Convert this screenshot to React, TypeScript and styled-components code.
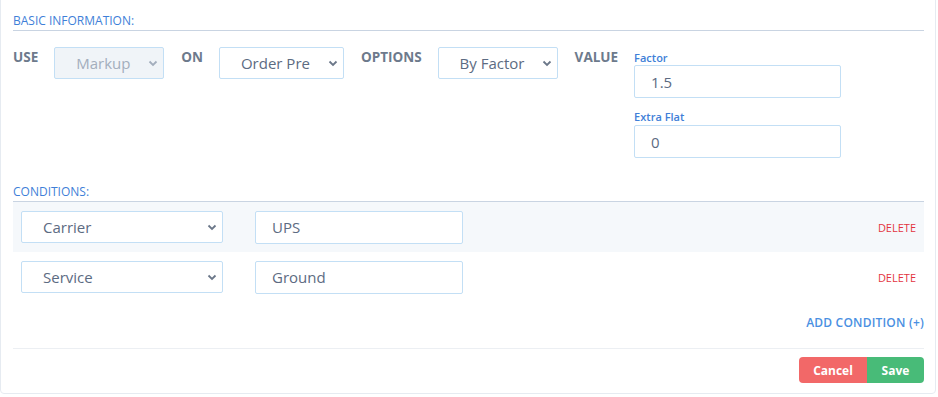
import styled, { createGlobalStyle } from 'styled-components';

const GlobalStyle = createGlobalStyle`
  body {
    margin: 0;
    background: #ffffff;
    font-family: 'Open Sans', 'Noto Sans', sans-serif;
    overflow: hidden;
  }
`;

const Card = styled.div`
  width: 936px;
  box-sizing: border-box;
  margin-top: -6px;
  padding: 18px 11px 10px 12px;
  border: 1px solid #e6ebf1;
  border-radius: 4px;
  background: #fff;
`;

const SectionTitle = styled.div<{ $top?: number }>`
  margin-top: ${(p) => p.$top ?? 0}px;
  font-size: 12px;
  line-height: 16px;
  color: #3f7fd8;
  text-transform: uppercase;
  padding-bottom: 1px;
  border-bottom: 1px solid #c9d4e2;
`;

const BasicRow = styled.div`
  display: flex;
  align-items: flex-start;
  gap: 16px;
  margin-top: 16px;
`;

const RowLabel = styled.span`
  font-size: 13.5px;
  line-height: 20px;
  font-weight: 700;
  color: #6d7a8c;
  text-transform: uppercase;
`;

const SelectWrap = styled.div<{ $width: number; $spaced?: boolean }>`
  position: relative;
  width: ${(p) => p.$width}px;
  height: 32px;
  flex: none;
  margin-right: ${(p) => (p.$spaced ? 1 : 0)}px;
`;

const Select = styled.select`
  appearance: none;
  width: 100%;
  height: 100%;
  box-sizing: border-box;
  padding: 0 24px 0 21px;
  font-family: inherit;
  font-size: 15px;
  color: #5c6b82;
  background: #fff;
  border: 1px solid #c3dff5;
  border-radius: 2px;
  outline: none;

  &:disabled {
    background: #f0f4f8;
    color: #a3aebd;
    opacity: 1;
  }
`;

const Chevron = styled.svg`
  position: absolute;
  right: 6px;
  top: 13px;
  pointer-events: none;
`;

const ValueColumn = styled.div`
  display: flex;
  flex-direction: column;
`;

const FieldLabel = styled.label<{ $top: number }>`
  margin-top: ${(p) => p.$top}px;
  font-size: 11px;
  line-height: 15px;
  font-weight: 600;
  color: #3f7fd8;
`;

const TextInput = styled.input<{ $width: number }>`
  width: ${(p) => p.$width}px;
  height: 33px;
  box-sizing: border-box;
  padding: 0 16px;
  font-family: inherit;
  font-size: 15px;
  color: #5c6b82;
  background: #fff;
  border: 1px solid #c3dff5;
  border-radius: 2px;
  outline: none;
`;

const ConditionList = styled.div`
  display: flex;
  flex-direction: column;
`;

const ConditionRow = styled.div<{ $shaded: boolean }>`
  display: flex;
  align-items: center;
  gap: 32px;
  height: 50px;
  padding: 0 8px;
  background: ${(p) => (p.$shaded ? '#f5f8fb' : 'transparent')};
`;

const DeleteLink = styled.span`
  margin-left: auto;
  font-size: 11px;
  color: #e3343f;
  text-transform: uppercase;
  cursor: pointer;
`;

const AddRow = styled.div`
  display: flex;
  justify-content: flex-end;
  margin-top: 13px;
  margin-bottom: 17px;
`;

const AddLink = styled.span`
  font-size: 12px;
  line-height: 16px;
  font-weight: 600;
  letter-spacing: 0.2px;
  color: #4a90e2;
  text-transform: uppercase;
  cursor: pointer;
`;

const Footer = styled.div`
  display: flex;
  justify-content: flex-end;
  padding-top: 8px;
  border-top: 1px solid #eceff3;
`;

const Button = styled.button<{ $kind: 'cancel' | 'save' }>`
  height: 26px;
  border: none;
  font-family: inherit;
  font-size: 12px;
  font-weight: 700;
  color: #fff;
  cursor: pointer;
  width: ${(p) => (p.$kind === 'cancel' ? 68 : 57)}px;
  background: ${(p) => (p.$kind === 'cancel' ? '#f26868' : '#48bb78')};
  border-radius: ${(p) => (p.$kind === 'cancel' ? '4px 0 0 4px' : '0 4px 4px 0')};
`;

const Dropdown = ({
  value,
  width,
  disabled,
  spaced,
}: {
  value: string;
  width: number;
  disabled?: boolean;
  spaced?: boolean;
}) => (
  <SelectWrap $width={width} $spaced={spaced}>
    <Select defaultValue={value} disabled={disabled}>
      <option>{value}</option>
    </Select>
    <Chevron width="10" height="7" viewBox="0 0 10 7">
      <path
        d="M1.5 1.5 L5 5 L8.5 1.5"
        fill="none"
        stroke={disabled ? '#a3aebd' : '#6b7789'}
        strokeWidth="1.8"
      />
    </Chevron>
  </SelectWrap>
);

const conditions = [
  { field: 'Carrier', value: 'UPS' },
  { field: 'Service', value: 'Ground' },
];

const App = () => (
  <>
    <GlobalStyle />
    <Card>
      <SectionTitle>Basic Information:</SectionTitle>
      <BasicRow>
        <RowLabel>Use</RowLabel>
        <Dropdown value="Markup" width={110} disabled spaced />
        <RowLabel>On</RowLabel>
        <Dropdown value="Order Pre" width={125} spaced />
        <RowLabel>Options</RowLabel>
        <Dropdown value="By Factor" width={120} spaced />
        <RowLabel>Value</RowLabel>
        <ValueColumn>
          <FieldLabel $top={3}>Factor</FieldLabel>
          <TextInput $width={207} defaultValue="1.5" />
          <FieldLabel $top={11}>Extra Flat</FieldLabel>
          <TextInput $width={207} defaultValue="0" style={{ marginTop: 1 }} />
        </ValueColumn>
      </BasicRow>

      <SectionTitle $top={26}>Conditions:</SectionTitle>
      <ConditionList>
        {conditions.map((c, i) => (
          <ConditionRow key={c.field} $shaded={i % 2 === 0}>
            <Dropdown value={c.field} width={202} />
            <TextInput $width={208} defaultValue={c.value} />
            <DeleteLink>Delete</DeleteLink>
          </ConditionRow>
        ))}
      </ConditionList>

      <AddRow>
        <AddLink>Add Condition (+)</AddLink>
      </AddRow>

      <Footer>
        <Button $kind="cancel">Cancel</Button>
        <Button $kind="save">Save</Button>
      </Footer>
    </Card>
  </>
);

export default App;
